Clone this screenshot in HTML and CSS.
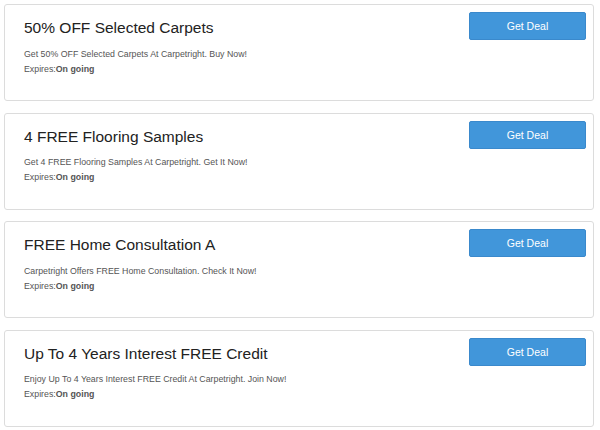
FILE: index.html
```html
<!DOCTYPE html>
<html lang="en">
<head>
    <meta charset="UTF-8">
    <meta name="viewport" content="width=device-width, initial-scale=1.0">
    <title>Carpetright Deals</title>
    <link rel="stylesheet" href="styles.css">
</head>
<body>
    <div class="deal-list">
        <div class="deal-card">
            <div class="deal-info">
                <h3 class="deal-title">50% OFF Selected Carpets</h3>
                <p class="deal-desc">Get 50% OFF Selected Carpets At Carpetright. Buy Now!</p>
                <p class="deal-expires">Expires:<b>On going</b></p>
            </div>
            <button class="deal-btn">Get Deal</button>
        </div>

        <div class="deal-card">
            <div class="deal-info">
                <h3 class="deal-title">4 FREE Flooring Samples</h3>
                <p class="deal-desc">Get 4 FREE Flooring Samples At Carpetright. Get It Now!</p>
                <p class="deal-expires">Expires:<b>On going</b></p>
            </div>
            <button class="deal-btn">Get Deal</button>
        </div>

        <div class="deal-card">
            <div class="deal-info">
                <h3 class="deal-title">FREE Home Consultation A</h3>
                <p class="deal-desc">Carpetright Offers FREE Home Consultation. Check It Now!</p>
                <p class="deal-expires">Expires:<b>On going</b></p>
            </div>
            <button class="deal-btn">Get Deal</button>
        </div>

        <div class="deal-card">
            <div class="deal-info">
                <h3 class="deal-title">Up To 4 Years Interest FREE Credit</h3>
                <p class="deal-desc">Enjoy Up To 4 Years Interest FREE Credit At Carpetright. Join Now!</p>
                <p class="deal-expires">Expires:<b>On going</b></p>
            </div>
            <button class="deal-btn">Get Deal</button>
        </div>
    </div>
</body>
</html>
```

FILE: styles.css
```css
/* General styles */
body {
    margin: 4px 0 0 4px;
    font-family: "Liberation Sans", Arial, sans-serif;
    background: #ffffff;
}

.deal-list {
    width: 590px;
}

.deal-card {
    display: flex;
    justify-content: space-between;
    align-items: flex-start;
    box-sizing: border-box;
    height: 97px;
    margin-bottom: 11.5px;
    padding: 7px 7px 0 19px;
    border: 1px solid #dcdcdc;
    border-radius: 3px;
}

.deal-title {
    margin: 7px 0 0 0;
    font-size: 15.5px;
    line-height: 18px;
    font-weight: normal;
    color: #222222;
}

.deal-desc,
.deal-expires {
    margin: 0;
    font-size: 8.8px;
    line-height: 15px;
    color: #555555;
}

.deal-desc {
    margin-top: 9.5px;
}

.deal-expires b {
    color: #555555;
}

.deal-btn {
    width: 117px;
    height: 28px;
    padding: 0;
    font-family: inherit;
    font-size: 10.5px;
    color: #ffffff;
    background-color: #4196da;
    border: 1px solid #3a89cc;
    border-radius: 2px;
    cursor: pointer;
}
```
